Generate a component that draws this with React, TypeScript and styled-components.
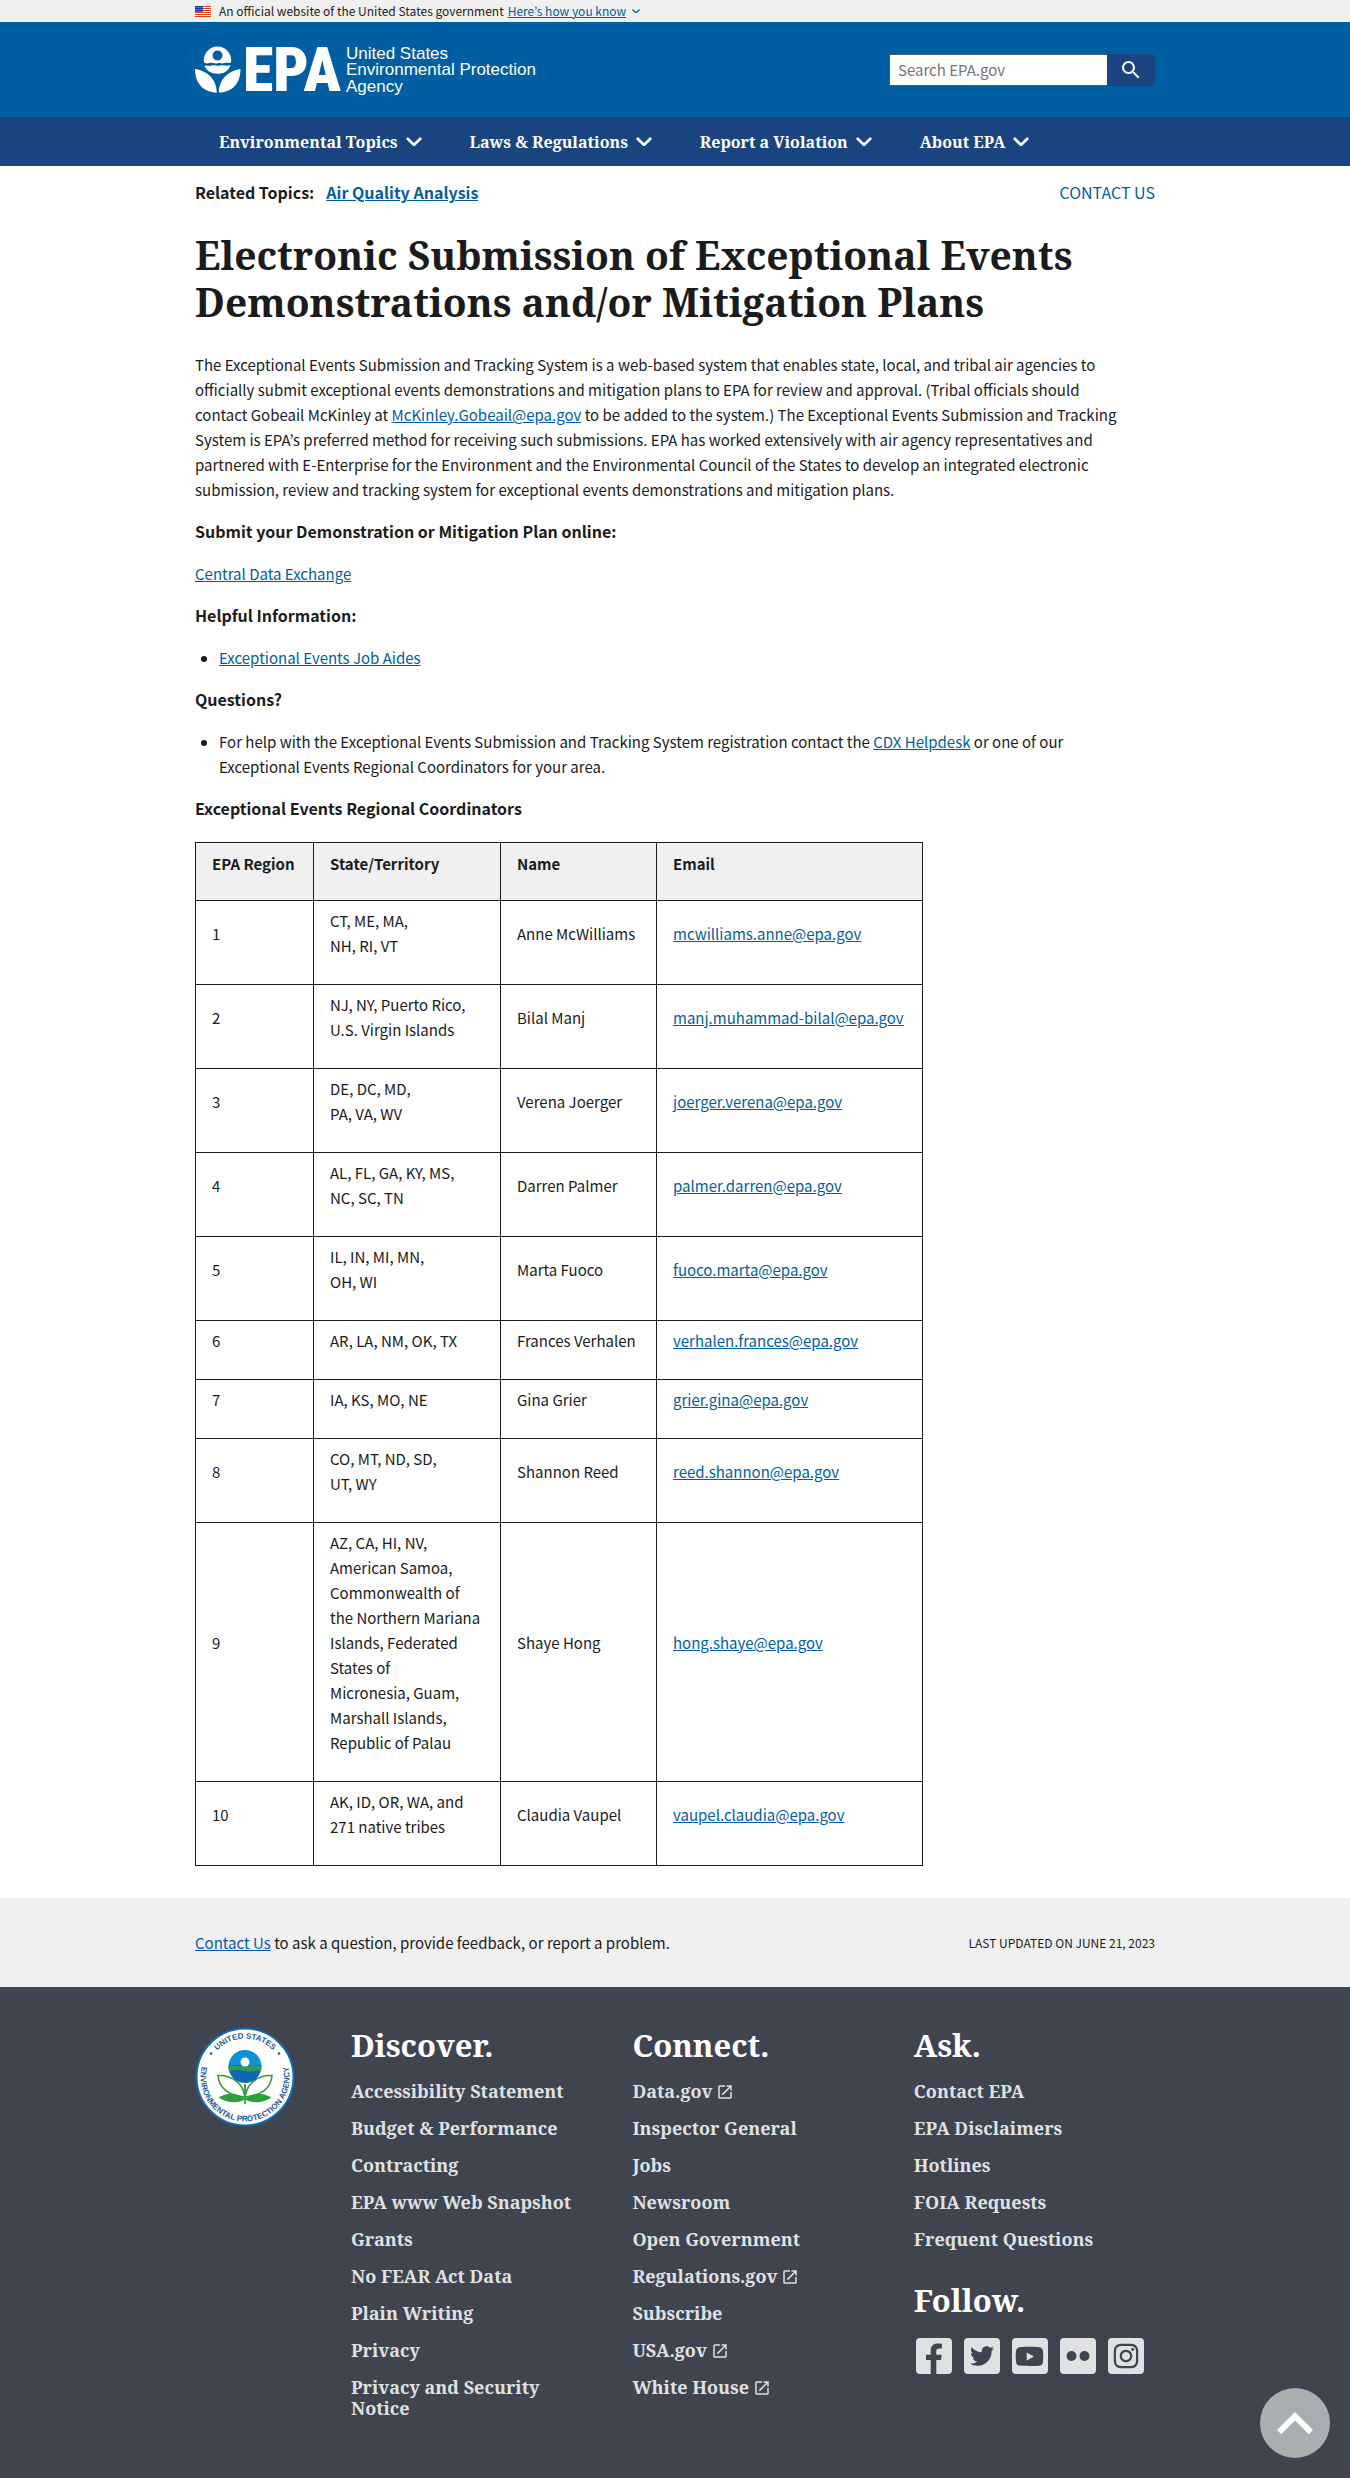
import React from 'react';
import styled, { createGlobalStyle } from 'styled-components';
import { MdOpenInNew, MdSearch } from 'react-icons/md';
import { FaInstagram, FaTwitter, FaYoutube } from 'react-icons/fa';

const sans = '"Noto Sans CJK KR", "Open Sans", sans-serif';
const serif = '"Noto Serif", "DejaVu Serif Condensed", serif';

const color = {
  ink: '#1b1b1b',
  link: '#005ea2',
  header: '#005ea2',
  nav: '#1a4480',
  pale: '#f0f0f0',
  footer: '#3f444f',
  footerText: '#dfe1e2',
  toTop: '#a9aeb1',
};

const GlobalStyle = createGlobalStyle`
  *, *::before, *::after { box-sizing: border-box; }
  body {
    margin: 0;
    background: #fff;
    color: ${color.ink};
    font-family: ${sans};
    font-size: 15px;
    line-height: 25px;
  }
`;

const Container = styled.div`
  max-width: 1024px;
  margin: 0 auto;
  padding: 0 32px;
`;

const Link = styled.a`
  color: ${color.link};
  text-decoration: underline;
`;

/* Government banner */

const Banner = styled.section`
  background: ${color.pale};
  font-size: 12px;
  line-height: 22px;
`;

const BannerRow = styled(Container)`
  display: flex;
  align-items: center;
  gap: 4px;
`;

const BannerText = styled.span`
  padding-left: 4px;
`;

const BannerToggle = styled.button`
  display: flex;
  align-items: center;
  gap: 6px;
  padding: 0;
  border: 0;
  background: none;
  color: ${color.link};
  font: inherit;
  cursor: pointer;

  span {
    text-decoration: underline;
  }
`;

/* Header */

const Header = styled.header`
  background: ${color.header};
`;

const HeaderRow = styled(Container)`
  display: flex;
  align-items: center;
  justify-content: space-between;
  gap: 32px;
  min-height: 95px;
`;

const LogoLink = styled.a`
  display: flex;

  svg {
    overflow: visible;
  }
`;

const SearchForm = styled.form`
  display: flex;
  height: 32px;
`;

const SearchInput = styled.input`
  width: 218px;
  padding: 0 8px;
  border: 1px solid #565c65;
  border-right: 0;
  border-radius: 0;
  background: #fff;
  color: ${color.ink};
  font-family: ${sans};
  font-size: 15px;

  &::placeholder {
    color: #757575;
    opacity: 1;
  }
`;

const SearchButton = styled.button`
  display: flex;
  align-items: center;
  justify-content: center;
  width: 48px;
  padding: 0;
  border: 0;
  border-radius: 0 4px 4px 0;
  background: ${color.nav};
  color: #fff;
  cursor: pointer;
`;

const Nav = styled.nav`
  background: ${color.nav};
`;

const NavRow = styled(Container)`
  display: flex;
`;

const NavButton = styled.button`
  display: flex;
  align-items: center;
  gap: 8px;
  height: 49px;
  padding: 0 24px;
  border: 0;
  background: none;
  color: #fff;
  font-family: ${serif};
  font-size: 16px;
  font-weight: 700;
  cursor: pointer;
`;

/* Page body */

const Main = styled.main`
  padding: 14px 0 32px;
`;

const TopicRow = styled.div`
  display: flex;
  justify-content: space-between;
  font-size: 16px;
`;

const RelatedTopics = styled.div`
  display: flex;
  gap: 12px;
  font-weight: 700;
`;

const ContactLink = styled.a`
  color: ${color.link};
  text-decoration: none;
  text-transform: uppercase;
`;

const Title = styled.h1`
  margin: 26px 0 27px;
  font-family: ${serif};
  font-size: 39px;
  font-weight: 700;
  line-height: 47px;
`;

const Prose = styled.div`
  max-width: 926px;
`;

const Paragraph = styled.p`
  margin: 0 0 17px;
`;

const Label = styled(Paragraph)`
  font-size: 16px;
  font-weight: 700;
`;

const List = styled.ul`
  margin: 0 0 17px;
  padding-left: 24px;
`;

const Table = styled.table`
  margin-top: 21px;
  border-collapse: collapse;
  text-align: left;
`;

const HeadCell = styled.th<{ $width: number }>`
  min-width: ${(p) => p.$width}px;
  padding: 8px 16px 24px;
  border: 1px solid ${color.ink};
  background: ${color.pale};
  font-weight: 700;
  white-space: nowrap;
`;

const Cell = styled.td`
  padding: 7px 16px 26px;
  border: 1px solid ${color.ink};
  white-space: pre-line;
`;

/* Page feedback band */

const Feedback = styled.section`
  background: ${color.pale};
`;

const FeedbackRow = styled(Container)`
  display: flex;
  align-items: center;
  justify-content: space-between;
  min-height: 89px;
`;

const Updated = styled.span`
  font-size: 12px;
  text-transform: uppercase;
`;

/* Footer */

const Footer = styled.footer`
  padding: 40px 0 60px;
  background: ${color.footer};
  color: ${color.footerText};
  font-family: ${serif};
`;

const FooterGrid = styled(Container)`
  display: grid;
  grid-template-columns: 156px 7fr 7fr 6fr;
`;

const FooterColumn = styled.div`
  padding-right: 40px;
`;

const LastColumn = styled.div``;

const FooterHeading = styled.h2`
  margin: 0 0 18px;
  color: #fff;
  font-size: 31px;
  font-weight: 700;
  line-height: 36px;
`;

const FooterLinks = styled.ul`
  display: grid;
  gap: 16px;
  margin: 0;
  padding: 0;
  list-style: none;

  & + h2 {
    margin-top: 32px;
  }
`;

const FooterLink = styled.a`
  display: flex;
  align-items: center;
  gap: 4px;
  color: inherit;
  font-size: 18px;
  font-weight: 700;
  line-height: 21px;
  text-decoration: none;
`;

const SocialLinks = styled.ul`
  display: flex;
  gap: 8px;
  margin: 0;
  padding: 0;
  list-style: none;
`;

const SocialLink = styled.a`
  display: grid;
  place-items: center;
  width: 40px;
  height: 40px;
`;

const SocialTile = styled.span`
  display: grid;
  place-items: center;
  width: 36px;
  height: 36px;
  border-radius: 4px;
  background: ${color.footerText};
  color: ${color.footer};
`;

const BackToTop = styled.a`
  position: fixed;
  right: 20px;
  bottom: 20px;
  display: grid;
  place-items: center;
  width: 70px;
  height: 70px;
  border-radius: 50%;
  background: ${color.toTop};
  color: #fff;
`;

/* Drawings */

function Chevron({ width, up = false }: { width: number; up?: boolean }) {
  return (
    <svg width={width} viewBox="0 0 12 7.41" fill="currentColor" aria-hidden="true">
      <path d={up ? 'M6 0L0 6l1.41 1.41L6 2.83l4.59 4.58L12 6z' : 'M10.59 0L6 4.58 1.41 0 0 1.41l6 6 6-6z'} />
    </svg>
  );
}

function Flag() {
  const stripes = [0, 2, 4, 6, 8, 10];
  return (
    <svg width="16" height="11" viewBox="0 0 16 11" role="img" aria-label="U.S. flag">
      <rect width="16" height="11" fill="#fff" />
      {stripes.map((y) => (
        <rect key={y} y={y} width="16" height="1" fill="#db3e1f" />
      ))}
      <rect width="8" height="6" fill="#1e33b1" />
      {[1, 3, 5, 7].map((x) => (
        <g key={x} fill="#fff" opacity="0.8">
          <rect x={x - 0.3} y="1" width="0.8" height="0.8" />
          <rect x={x - 0.3} y="3" width="0.8" height="0.8" />
          <rect x={x - 0.3} y="4.8" width="0.8" height="0.8" />
        </g>
      ))}
    </svg>
  );
}

function EpaLogo() {
  return (
    <svg width="350" height="50" viewBox="0 0 350 50" fill="#fff" role="img" aria-label="US EPA">
      <path d="M9 17.6A13.7 13.7 0 1 1 36 17.6C34 18.6 32 17.2 29.5 18C27 19 25 17.4 22.5 18.2C20 19 17 17.2 14.5 18C12.5 18.6 10.5 18.6 9 17.6Z" />
      <circle cx="22.5" cy="10.5" r="5" fill={color.header} />
      <path d="M9.5 20.8C12 20 14 21.4 17 20.6C20 19.8 22 21.4 25 20.6C28 19.8 31 21.4 35.5 20.2C33.5 26 28.5 28.8 22.5 28.8C16.5 28.8 11.5 26 9.5 20.8Z" />
      <path d="M0 24C9 25.5 21 31 21.8 47.5C8 47.5 0 38 0 24Z" />
      <path d="M45.5 24C36.5 25.5 24.5 31 23.7 47.5C37.5 47.5 45.5 38 45.5 24Z" />
      <text x="48" y="46" fontFamily='"Roboto Condensed", Roboto, sans-serif' fontWeight="900" fontSize="62">
        EPA
      </text>
      <g fontFamily='"Liberation Sans", Arial, sans-serif' fontSize="17">
        <text x="151" y="14">United States</text>
        <text x="151" y="30">Environmental Protection</text>
        <text x="151" y="47">Agency</text>
      </g>
    </svg>
  );
}

function EpaSeal() {
  return (
    <svg width="100" height="100" viewBox="0 0 100 100" role="img" aria-label="EPA seal">
      <defs>
        <path id="seal-top" d="M11.5 50A38.5 38.5 0 0 1 88.5 50" />
        <path id="seal-bottom" d="M9.3 31.9A44.5 44.5 0 1 0 90.7 31.9" />
        <clipPath id="seal-sun">
          <circle cx="50" cy="39.5" r="16.5" />
        </clipPath>
      </defs>
      <circle cx="50" cy="50" r="48.5" fill="#fff" stroke="#0e6cb6" strokeWidth="2" />
      <g
        fontFamily='"Liberation Sans", Arial, sans-serif'
        fontWeight="700"
        fontSize="8"
        fill="#1b5c9e"
        textAnchor="middle"
      >
        <text>
          <textPath href="#seal-top" startOffset="50%">UNITED STATES</textPath>
        </text>
        <text>
          <textPath href="#seal-bottom" startOffset="50%">ENVIRONMENTAL PROTECTION AGENCY</textPath>
        </text>
      </g>
      <circle cx="16" cy="26.5" r="1.3" fill="#1b5c9e" />
      <circle cx="84" cy="26.5" r="1.3" fill="#1b5c9e" />
      <g fill="#fff" stroke="#2f9e3f" strokeWidth="1.6">
        <path d="M23 48.5C38 48 48 57 50 70C35 69 24 62 23 48.5Z" />
        <path d="M77 48.5C62 48 52 57 50 70C65 69 76 62 77 48.5Z" />
      </g>
      <g clipPath="url(#seal-sun)">
        <rect x="33" y="22" width="34" height="17" fill="#0d8fd9" />
        <rect x="33" y="38" width="34" height="20" fill="#1266b5" />
        <path d="M33 39C38 37.5 42 40 47 39S58 38 67 39V44C60 42.5 56 45.5 50 44S39 43 33 44.5Z" fill="#2a9c56" />
        <circle cx="50" cy="35" r="4.5" fill="#fff" />
      </g>
      <path d="M49.1 57h1.8v20h-1.8z" fill="#2f9e3f" />
      <path
        d="M50 72C42 64.5 31 66 23.5 70.5C31 76 44 77 50 72C56 77 69 76 76.5 70.5C69 66 58 64.5 50 72Z"
        fill="#2f9e3f"
      />
    </svg>
  );
}

function FacebookGlyph() {
  return (
    <svg width="36" height="36" viewBox="0 0 24 24" fill="currentColor" aria-hidden="true">
      <path d="M9.8 24v-9.294H6.67v-3.621h3.13V8.41c0-3.099 1.894-4.785 4.659-4.785 1.325 0 2.464.097 2.796.141v3.24h-1.921c-1.5 0-1.792.721-1.792 1.771v2.311h3.584l-.465 3.63h-3.12V24z" />
    </svg>
  );
}

function FlickrGlyph() {
  return (
    <svg width="36" height="36" viewBox="0 0 36 36" fill="currentColor" aria-hidden="true">
      <circle cx="11.5" cy="18" r="5" />
      <circle cx="24.5" cy="18" r="5" />
    </svg>
  );
}

/* Content */

const navItems = ['Environmental Topics', 'Laws & Regulations', 'Report a Violation', 'About EPA'];

const coordinators = [
  ['1', 'CT, ME, MA,\nNH, RI, VT', 'Anne McWilliams', 'mcwilliams.anne@epa.gov'],
  ['2', 'NJ, NY, Puerto Rico,\nU.S. Virgin Islands', 'Bilal Manj', 'manj.muhammad-bilal@epa.gov'],
  ['3', 'DE, DC, MD,\nPA, VA, WV', 'Verena Joerger', 'joerger.verena@epa.gov'],
  ['4', 'AL, FL, GA, KY, MS,\nNC, SC, TN', 'Darren Palmer', 'palmer.darren@epa.gov'],
  ['5', 'IL, IN, MI, MN,\nOH, WI', 'Marta Fuoco', 'fuoco.marta@epa.gov'],
  ['6', 'AR, LA, NM, OK, TX', 'Frances Verhalen', 'verhalen.frances@epa.gov'],
  ['7', 'IA, KS, MO, NE', 'Gina Grier', 'grier.gina@epa.gov'],
  ['8', 'CO, MT, ND, SD,\nUT, WY', 'Shannon Reed', 'reed.shannon@epa.gov'],
  [
    '9',
    'AZ, CA, HI, NV,\nAmerican Samoa,\nCommonwealth of\nthe Northern Mariana\nIslands, Federated\nStates of\nMicronesia, Guam,\nMarshall Islands,\nRepublic of Palau',
    'Shaye Hong',
    'hong.shaye@epa.gov',
  ],
  ['10', 'AK, ID, OR, WA, and\n271 native tribes', 'Claudia Vaupel', 'vaupel.claudia@epa.gov'],
];

type FooterItem = { label: string; external?: boolean };

const discover: FooterItem[] = [
  { label: 'Accessibility Statement' },
  { label: 'Budget & Performance' },
  { label: 'Contracting' },
  { label: 'EPA www Web Snapshot' },
  { label: 'Grants' },
  { label: 'No FEAR Act Data' },
  { label: 'Plain Writing' },
  { label: 'Privacy' },
  { label: 'Privacy and Security Notice' },
];

const connect: FooterItem[] = [
  { label: 'Data.gov', external: true },
  { label: 'Inspector General' },
  { label: 'Jobs' },
  { label: 'Newsroom' },
  { label: 'Open Government' },
  { label: 'Regulations.gov', external: true },
  { label: 'Subscribe' },
  { label: 'USA.gov', external: true },
  { label: 'White House', external: true },
];

const ask: FooterItem[] = [
  { label: 'Contact EPA' },
  { label: 'EPA Disclaimers' },
  { label: 'Hotlines' },
  { label: 'FOIA Requests' },
  { label: 'Frequent Questions' },
];

const social = [
  { label: 'Facebook', glyph: <FacebookGlyph /> },
  { label: 'Twitter', glyph: <FaTwitter size={24} /> },
  { label: 'YouTube', glyph: <FaYoutube size={29} /> },
  { label: 'Flickr', glyph: <FlickrGlyph /> },
  { label: 'Instagram', glyph: <FaInstagram size={28} /> },
];

function FooterList({ items }: { items: FooterItem[] }) {
  return (
    <FooterLinks>
      {items.map(({ label, external }) => (
        <li key={label}>
          <FooterLink href="#">
            {label}
            {external && <MdOpenInNew size={18} aria-label="Exit EPA website" />}
          </FooterLink>
        </li>
      ))}
    </FooterLinks>
  );
}

export default function App() {
  return (
    <>
      <GlobalStyle />
      <Banner aria-label="Official government website">
        <BannerRow>
          <Flag />
          <BannerText>An official website of the United States government</BannerText>
          <BannerToggle type="button">
            <span>Here’s how you know</span>
            <Chevron width={8} />
          </BannerToggle>
        </BannerRow>
      </Banner>

      <Header>
        <HeaderRow>
          <LogoLink href="#">
            <EpaLogo />
          </LogoLink>
          <SearchForm role="search">
            <SearchInput type="search" aria-label="Search" placeholder="Search EPA.gov" />
            <SearchButton type="submit" aria-label="Search">
              <MdSearch size={24} />
            </SearchButton>
          </SearchForm>
        </HeaderRow>
        <Nav aria-label="Primary navigation">
          <NavRow>
            {navItems.map((item) => (
              <NavButton key={item} type="button">
                {item}
                <Chevron width={16} />
              </NavButton>
            ))}
          </NavRow>
        </Nav>
      </Header>

      <Main>
        <Container>
          <TopicRow>
            <RelatedTopics>
              <span>Related Topics:</span>
              <Link href="#">Air Quality Analysis</Link>
            </RelatedTopics>
            <ContactLink href="#">Contact Us</ContactLink>
          </TopicRow>
          <Title>Electronic Submission of Exceptional Events Demonstrations and/or Mitigation Plans</Title>
          <Prose>
            <Paragraph>
              The Exceptional Events Submission and Tracking System is a web-based system that enables state, local, and
              tribal air agencies to officially submit exceptional events demonstrations and mitigation plans to EPA for
              review and approval. (Tribal officials should contact Gobeail McKinley at{' '}
              <Link href="#">McKinley.Gobeail@epa.gov</Link> to be added to the system.) The Exceptional Events
              Submission and Tracking System is EPA’s preferred method for receiving such submissions. EPA has worked
              extensively with air agency representatives and partnered with E-Enterprise for the Environment and the
              Environmental Council of the States to develop an integrated electronic submission, review and tracking
              system for exceptional events demonstrations and mitigation plans.
            </Paragraph>
            <Label>Submit your Demonstration or Mitigation Plan online:</Label>
            <Paragraph>
              <Link href="#">Central Data Exchange</Link>
            </Paragraph>
            <Label>Helpful Information:</Label>
            <List>
              <li>
                <Link href="#">Exceptional Events Job Aides</Link>
              </li>
            </List>
            <Label>Questions?</Label>
            <List>
              <li>
                For help with the Exceptional Events Submission and Tracking System registration contact the{' '}
                <Link href="#">CDX Helpdesk</Link> or one of our Exceptional Events Regional Coordinators for your area.
              </li>
            </List>
            <Label>Exceptional Events Regional Coordinators</Label>
          </Prose>
          <Table>
            <thead>
              <tr>
                <HeadCell scope="col" $width={118}>EPA Region</HeadCell>
                <HeadCell scope="col" $width={187}>State/Territory</HeadCell>
                <HeadCell scope="col" $width={156}>Name</HeadCell>
                <HeadCell scope="col" $width={266}>Email</HeadCell>
              </tr>
            </thead>
            <tbody>
              {coordinators.map(([region, states, name, email]) => (
                <tr key={region}>
                  <Cell>{region}</Cell>
                  <Cell>{states}</Cell>
                  <Cell>{name}</Cell>
                  <Cell>
                    <Link href={`mailto:${email}`}>{email}</Link>
                  </Cell>
                </tr>
              ))}
            </tbody>
          </Table>
        </Container>
      </Main>

      <Feedback>
        <FeedbackRow>
          <span>
            <Link href="#">Contact Us</Link> to ask a question, provide feedback, or report a problem.
          </span>
          <Updated>Last updated on June 21, 2023</Updated>
        </FeedbackRow>
      </Feedback>

      <Footer>
        <FooterGrid>
          <EpaSeal />
          <FooterColumn>
            <FooterHeading>Discover.</FooterHeading>
            <FooterList items={discover} />
          </FooterColumn>
          <FooterColumn>
            <FooterHeading>Connect.</FooterHeading>
            <FooterList items={connect} />
          </FooterColumn>
          <LastColumn>
            <FooterHeading>Ask.</FooterHeading>
            <FooterList items={ask} />
            <FooterHeading>Follow.</FooterHeading>
            <SocialLinks>
              {social.map(({ label, glyph }) => (
                <li key={label}>
                  <SocialLink href="#" aria-label={label}>
                    <SocialTile>{glyph}</SocialTile>
                  </SocialLink>
                </li>
              ))}
            </SocialLinks>
          </LastColumn>
        </FooterGrid>
      </Footer>

      <BackToTop href="#" aria-label="Back to top">
        <Chevron width={36} up />
      </BackToTop>
    </>
  );
}
